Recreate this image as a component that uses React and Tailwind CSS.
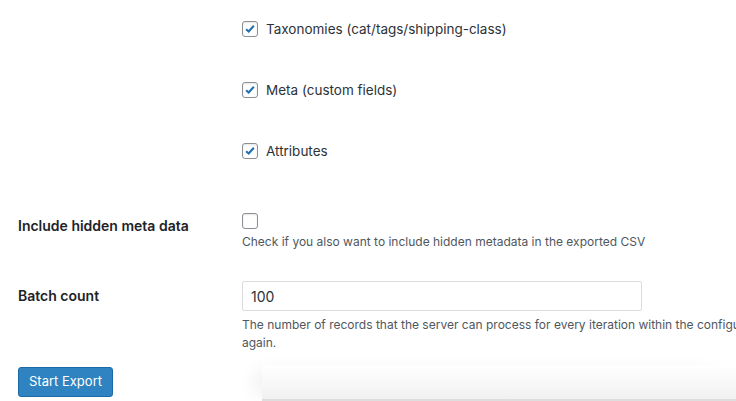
import React from "react";

const Check = ({ checked }) => (
    <span className="flex h-4 w-4 shrink-0 items-center justify-center rounded-[3px] border border-[#8c8f94] bg-white shadow-[inset_0_1px_2px_rgba(0,0,0,0.1)]">
        {checked && (
            <svg viewBox="0 0 20 20" className="h-[18px] w-[18px]">
                <path d="M4.5 10.2l3.6 3.4 7.4-8.2" fill="none" stroke="#2271b1" strokeWidth="3" />
            </svg>
        )}
    </span>
);

const fields = [
    "Taxonomies (cat/tags/shipping-class)",
    "Meta (custom fields)",
    "Attributes",
];

export default function App() {
    return (
        <div className="relative h-[401px] w-[736px] overflow-hidden bg-white text-[#3c434a] font-['Inter',sans-serif]">
            {/* export fields */}
            <div className="flex flex-col gap-[45px] pl-[242px] pt-[21px]">
                {fields.map((f) => (
                    <label key={f} className="flex h-4 items-center gap-2 text-[13.5px] text-[#2c3338]">
                        <Check checked />
                        <span>{f}</span>
                    </label>
                ))}
            </div>

            {/* hidden meta */}
            <div className="mt-[54px] flex">
                <div className="w-[242px] shrink-0 pl-[18px] pt-[2px] text-[14px] font-semibold text-[#1d2327]">
                    Include hidden meta data
                </div>
                <div className="flex flex-col">
                    <Check />
                    <p className="mt-[4px] text-[12px] leading-[18px] text-[#50575e]">
                        Check if you also want to include hidden metadata in the exported CSV
                    </p>
                </div>
            </div>

            {/* batch count */}
            <div className="mt-[30px] flex">
                <div className="w-[242px] shrink-0 pl-[18px] pt-[4px] text-[14px] font-semibold text-[#1d2327]">
                    Batch count
                </div>
                <div className="flex min-w-0 flex-col">
                    <input
                        defaultValue="100"
                        className="h-[30px] w-[400px] rounded-[2px] border border-[#dcdcde] px-2 text-[14px] text-[#2c3338] outline-none"
                    />
                    <p className="mt-[5px] whitespace-nowrap text-[12px] leading-[18px] text-[#50575e]">
                        The number of records that the server can process for every iteration within the configured timeout interval.
                        <br />
                        again.
                    </p>
                </div>
            </div>

            {/* faint panel peeking in at the bottom */}
            <div className="absolute bottom-0 left-[262px] right-0 h-[36px] border-b-2 border-[#dedede] bg-gradient-to-b from-white to-[#f1f1f1] shadow-[-14px_0_18px_-6px_rgba(0,0,0,0.06)]" />

            <div className="relative mt-[15px] pl-[18px]">
                <button className="h-[30px] w-[95px] rounded-[3px] border border-[#1c6aa5] bg-[#2e83c0] text-[13px] text-white">
                    Start Export
                </button>
            </div>
        </div>
    );
}
